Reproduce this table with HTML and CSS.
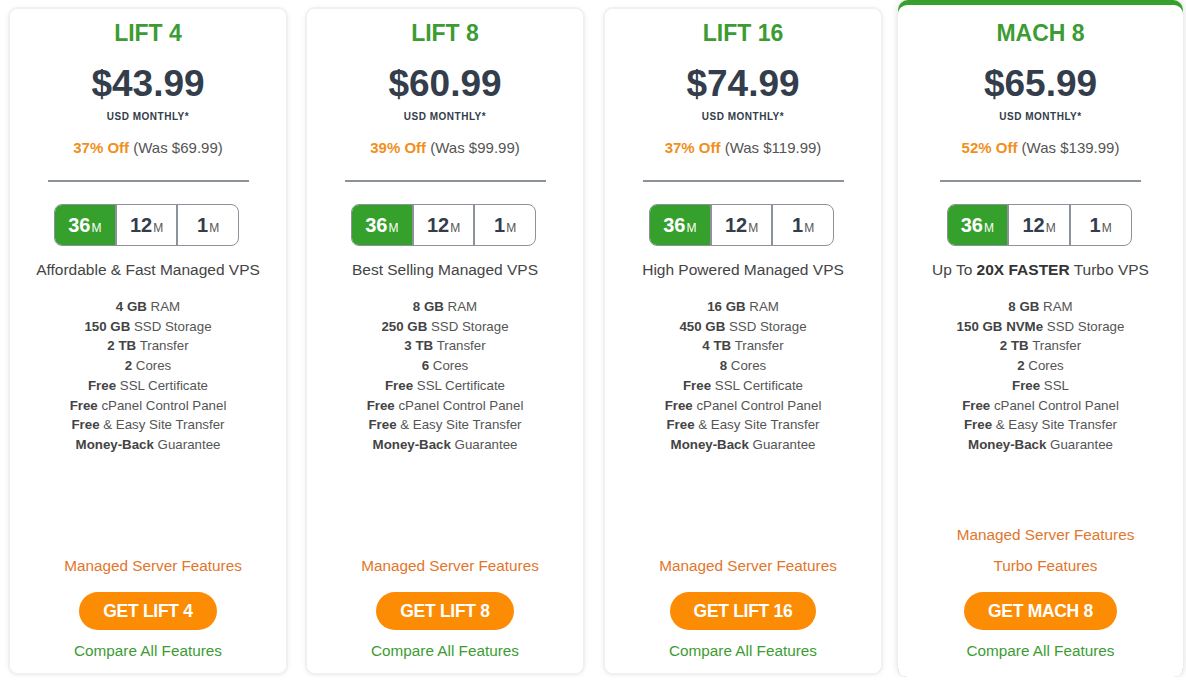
FILE: index.html
```html
<!DOCTYPE html>
<html>
<head>
<meta charset="utf-8">
<link rel="stylesheet" href="styles.css">
</head>
<body>
<div class="plans">
  <div class="card">
    <div class="card-inner">
      <div class="title">LIFT 4</div>
      <div class="price">$43.99</div>
      <div class="period">USD MONTHLY*</div>
      <div class="off"><b>37% Off</b> (Was $69.99)</div>
      <div class="divider"></div>
      <div class="toggle">
        <div class="seg active"><b>36</b><small>M</small></div>
        <div class="seg"><b>12</b><small>M</small></div>
        <div class="seg"><b>1</b><small>M</small></div>
      </div>
      <div class="tagline">Affordable &amp; Fast Managed VPS</div>
      <ul class="features">
        <li><b>4 GB</b> RAM</li>
        <li><b>150 GB</b> SSD Storage</li>
        <li><b>2 TB</b> Transfer</li>
        <li><b>2</b> Cores</li>
        <li><b>Free</b> SSL Certificate</li>
        <li><b>Free</b> cPanel Control Panel</li>
        <li><b>Free</b> &amp; Easy Site Transfer</li>
        <li><b>Money-Back</b> Guarantee</li>
      </ul>
      <div class="bottom">
        <a class="link-orange">Managed Server Features</a>
        <a class="btn">GET LIFT 4</a>
        <a class="link-green">Compare All Features</a>
      </div>
    </div>
  </div>

  <div class="card">
    <div class="card-inner">
      <div class="title">LIFT 8</div>
      <div class="price">$60.99</div>
      <div class="period">USD MONTHLY*</div>
      <div class="off"><b>39% Off</b> (Was $99.99)</div>
      <div class="divider"></div>
      <div class="toggle">
        <div class="seg active"><b>36</b><small>M</small></div>
        <div class="seg"><b>12</b><small>M</small></div>
        <div class="seg"><b>1</b><small>M</small></div>
      </div>
      <div class="tagline">Best Selling Managed VPS</div>
      <ul class="features">
        <li><b>8 GB</b> RAM</li>
        <li><b>250 GB</b> SSD Storage</li>
        <li><b>3 TB</b> Transfer</li>
        <li><b>6</b> Cores</li>
        <li><b>Free</b> SSL Certificate</li>
        <li><b>Free</b> cPanel Control Panel</li>
        <li><b>Free</b> &amp; Easy Site Transfer</li>
        <li><b>Money-Back</b> Guarantee</li>
      </ul>
      <div class="bottom">
        <a class="link-orange">Managed Server Features</a>
        <a class="btn">GET LIFT 8</a>
        <a class="link-green">Compare All Features</a>
      </div>
    </div>
  </div>

  <div class="card card3">
    <div class="card-inner">
      <div class="title">LIFT 16</div>
      <div class="price">$74.99</div>
      <div class="period">USD MONTHLY*</div>
      <div class="off"><b>37% Off</b> (Was $119.99)</div>
      <div class="divider"></div>
      <div class="toggle">
        <div class="seg active"><b>36</b><small>M</small></div>
        <div class="seg"><b>12</b><small>M</small></div>
        <div class="seg"><b>1</b><small>M</small></div>
      </div>
      <div class="tagline">High Powered Managed VPS</div>
      <ul class="features">
        <li><b>16 GB</b> RAM</li>
        <li><b>450 GB</b> SSD Storage</li>
        <li><b>4 TB</b> Transfer</li>
        <li><b>8</b> Cores</li>
        <li><b>Free</b> SSL Certificate</li>
        <li><b>Free</b> cPanel Control Panel</li>
        <li><b>Free</b> &amp; Easy Site Transfer</li>
        <li><b>Money-Back</b> Guarantee</li>
      </ul>
      <div class="bottom">
        <a class="link-orange">Managed Server Features</a>
        <a class="btn">GET LIFT 16</a>
        <a class="link-green">Compare All Features</a>
      </div>
    </div>
  </div>

  <div class="card featured">
    <div class="card-inner">
      <div class="title">MACH 8</div>
      <div class="price">$65.99</div>
      <div class="period">USD MONTHLY*</div>
      <div class="off"><b>52% Off</b> (Was $139.99)</div>
      <div class="divider"></div>
      <div class="toggle">
        <div class="seg active"><b>36</b><small>M</small></div>
        <div class="seg"><b>12</b><small>M</small></div>
        <div class="seg"><b>1</b><small>M</small></div>
      </div>
      <div class="tagline">Up To <b>20X FASTER</b> Turbo VPS</div>
      <ul class="features">
        <li><b>8 GB</b> RAM</li>
        <li><b>150 GB NVMe</b> SSD Storage</li>
        <li><b>2 TB</b> Transfer</li>
        <li><b>2</b> Cores</li>
        <li><b>Free</b> SSL</li>
        <li><b>Free</b> cPanel Control Panel</li>
        <li><b>Free</b> &amp; Easy Site Transfer</li>
        <li><b>Money-Back</b> Guarantee</li>
      </ul>
      <div class="bottom">
        <a class="link-orange">Managed Server Features</a>
        <a class="link-orange">Turbo Features</a>
        <a class="btn">GET MACH 8</a>
        <a class="link-green">Compare All Features</a>
      </div>
    </div>
  </div>
</div>
</body>
</html>
```

FILE: styles.css
```css
* { box-sizing: border-box; }

body {
  margin: 0;
  background: #ffffff;
  font-family: "Liberation Sans", Arial, sans-serif;
  color: #444;
}

.plans {
  display: flex;
  align-items: flex-start;
  gap: 17px;
  padding-left: 8px;
}

.card {
  width: 280px;
  height: 668px;
  margin-top: 7px;
  border: 2px solid #eef2ec;
  border-radius: 10px;
  background: #fff;
  box-shadow: 0 1px 5px rgba(0, 0, 0, 0.06);
  display: flex;
}

.card3 { margin-left: 1px; }

.card-inner {
  flex: 1;
  display: flex;
  flex-direction: column;
  align-items: center;
  padding: 11px 0 12px;
  border-radius: 8px;
  background: #fff;
}

.featured {
  width: 285px;
  height: 677px;
  margin-top: 0;
  margin-left: -2px;
  border: none;
  background: #35a02b;
  padding-top: 5px;
  border-radius: 10px;
  box-shadow: 0 0 7px rgba(0, 0, 0, 0.16);
}

.featured .card-inner {
  border-radius: 9px;
  padding-top: 15px;
  padding-bottom: 16px;
}

.title {
  font-size: 23px;
  line-height: 26px;
  font-weight: 700;
  color: #3c9c33;
}

.price {
  margin-top: 16px;
  font-size: 37px;
  line-height: 44px;
  font-weight: 700;
  color: #333d4b;
}

.period {
  margin-top: 4px;
  font-size: 10px;
  line-height: 14px;
  font-weight: 700;
  letter-spacing: 0.5px;
  color: #333d4b;
}

.off {
  margin-top: 14px;
  font-size: 15px;
  line-height: 20px;
  color: #555;
}

.off b { color: #f0901c; }

.divider {
  margin-top: 22px;
  width: 201px;
  height: 2px;
  background: #8c929a;
}

.toggle {
  margin-top: 22px;
  margin-right: 3px;
  display: flex;
  width: 185px;
  height: 42px;
  border: 1px solid #8c929a;
  border-radius: 8px;
  overflow: hidden;
}

.seg {
  flex: 1;
  display: flex;
  align-items: baseline;
  justify-content: center;
  padding-top: 8px;
  color: #333d4b;
}

.seg + .seg { border-left: 2px solid #8c929a; }

.seg b {
  font-size: 20px;
  line-height: 24px;
  font-weight: 700;
}

.seg small {
  font-size: 12px;
  color: #555;
  margin-left: 1px;
}

.seg.active {
  background: #35a02b;
  color: #fff;
}

.seg.active small { color: #fff; }

.tagline {
  margin-top: 14px;
  font-size: 15.5px;
  line-height: 20px;
  color: #444;
}

.tagline b { color: #333; }

.features {
  list-style: none;
  margin: 17px 0 0;
  padding: 0;
  text-align: center;
  font-size: 13.3px;
  line-height: 19.7px;
  color: #555;
}

.features b { color: #444; }

.bottom {
  margin-top: auto;
  display: flex;
  flex-direction: column;
  align-items: center;
}

.link-orange {
  font-size: 15.3px;
  line-height: 20px;
  color: #e2762c;
  margin-left: 10px;
}

.link-orange + .link-orange { margin-top: 11px; }

.btn {
  margin-top: 16px;
  display: flex;
  align-items: center;
  justify-content: center;
  height: 38px;
  padding: 0 24px;
  border-radius: 19px;
  background: #fc8c04;
  color: #fff;
  font-size: 17.5px;
  font-weight: 700;
  letter-spacing: -0.3px;
}

.link-green {
  margin-top: 11px;
  font-size: 15.3px;
  line-height: 20px;
  color: #3c9c33;
}
```
